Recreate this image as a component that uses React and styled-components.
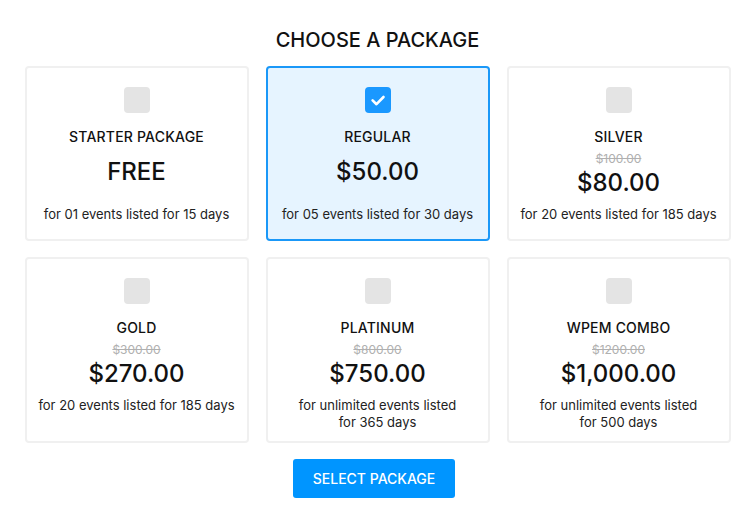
import React, { useState } from "react";
import styled, { createGlobalStyle } from "styled-components";

const packages = [
  { id: 1, name: "Starter Package", price: "FREE", desc: "for 01 events listed for 15 days" },
  { id: 2, name: "Regular", price: "$50.00", desc: "for 05 events listed for 30 days" },
  { id: 3, name: "Silver", oldPrice: "$100.00", price: "$80.00", desc: "for 20 events listed for 185 days" },
  { id: 4, name: "Gold", oldPrice: "$300.00", price: "$270.00", desc: "for 20 events listed for 185 days" },
  { id: 5, name: "Platinum", oldPrice: "$800.00", price: "$750.00", desc: "for unlimited events listed\nfor 365 days" },
  { id: 6, name: "WPEM Combo", oldPrice: "$1200.00", price: "$1,000.00", desc: "for unlimited events listed\nfor 500 days" },
];

const App = () => {
  const [selected, setSelected] = useState(2);

  return (
    <>
      <GlobalStyle />
      <Page>
        <Heading>Choose a package</Heading>
        <Grid>
          {packages.map((pkg) => {
            const isActive = selected === pkg.id;
            return (
              <Card key={pkg.id} $active={isActive} onClick={() => setSelected(pkg.id)}>
                <CheckBox $checked={isActive}>
                  {isActive && (
                    <svg width="26" height="26" viewBox="0 0 26 26" fill="none">
                      <path
                        d="M7.6 13.4l3.9 3.8 7-7.2"
                        stroke="#fff"
                        strokeWidth="2.6"
                        strokeLinecap="round"
                        strokeLinejoin="round"
                      />
                    </svg>
                  )}
                </CheckBox>
                <PackageName>{pkg.name}</PackageName>
                <PriceBlock $single={!pkg.oldPrice}>
                  {pkg.oldPrice && <OldPrice>{pkg.oldPrice}</OldPrice>}
                  <Price>{pkg.price}</Price>
                </PriceBlock>
                <Desc>{pkg.desc}</Desc>
              </Card>
            );
          })}
        </Grid>
        <SelectButton>Select Package</SelectButton>
      </Page>
    </>
  );
};

const GlobalStyle = createGlobalStyle`
  body {
    margin: 0;
    background: #fff;
    font-family: "Inter", "Open Sans", sans-serif;
    color: #111;
  }
`;

const Page = styled.div`
  width: 706px;
  margin: 0 auto;
  padding-top: 28px;
  display: flex;
  flex-direction: column;
  align-items: center;
`;

const Heading = styled.h1`
  margin: 0 0 14px;
  font-size: 20px;
  font-weight: 500;
  text-transform: uppercase;
  line-height: 24px;
  color: #111;
`;

const Grid = styled.div`
  width: 100%;
  display: grid;
  grid-template-columns: repeat(3, 1fr);
  gap: 16px 17px;
`;

const Card = styled.div`
  box-sizing: border-box;
  min-height: 175px;
  padding: 19px 10px 10px;
  display: flex;
  flex-direction: column;
  align-items: center;
  text-align: center;
  border: ${(p) => (p.$active ? "2px solid #1a98f8" : "2px solid #f0f0f0")};
  border-radius: 4px;
  background: ${(p) => (p.$active ? "#e6f4ff" : "#fff")};
  cursor: pointer;
`;

const CheckBox = styled.div`
  width: 26px;
  height: 26px;
  border-radius: 4px;
  background: ${(p) => (p.$checked ? "#1a98ff" : "#e4e4e4")};
  display: flex;
  align-items: center;
  justify-content: center;
`;

const PackageName = styled.div`
  margin-top: 15px;
  font-size: 14px;
  font-weight: 500;
  line-height: 18px;
  text-transform: uppercase;
  letter-spacing: 0.2px;
`;

const PriceBlock = styled.div`
  box-sizing: border-box;
  height: 47px;
  margin-top: 5px;
  padding-bottom: ${(p) => (p.$single ? "5px" : "0")};
  display: flex;
  flex-direction: column;
  justify-content: center;
  align-items: center;
`;

const OldPrice = styled.div`
  font-size: 12px;
  line-height: 15px;
  color: #b0b0b0;
  text-decoration: line-through;
  margin-bottom: 2px;
`;

const Price = styled.div`
  font-size: 24px;
  font-weight: 500;
  line-height: 30px;
`;

const Desc = styled.div`
  margin-top: 8px;
  font-size: 13px;
  line-height: 17px;
  color: #222;
  white-space: pre-line;
`;

const SelectButton = styled.button`
  margin: 16px 7px 0 0;
  width: 162px;
  height: 39px;
  border: none;
  border-radius: 3px;
  background: #0095ff;
  color: #fff;
  font-family: "Inter", "Open Sans", sans-serif;
  font-size: 14px;
  font-weight: 500;
  text-transform: uppercase;
  cursor: pointer;
`;

export default App;
